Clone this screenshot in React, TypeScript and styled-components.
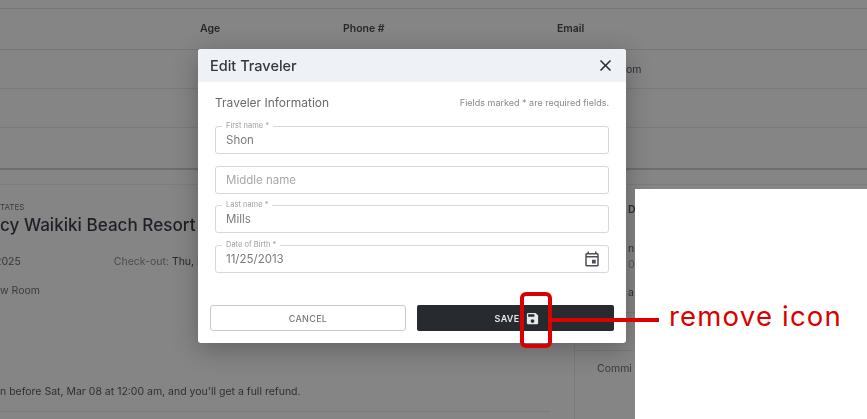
import * as React from 'react';
import { MdClose, MdOutlineEvent, MdSave } from 'react-icons/md';
import styled, { createGlobalStyle } from 'styled-components';

const FONT = `Inter, "Open Sans", "Liberation Sans", sans-serif`;

const GlobalStyle = createGlobalStyle`
  html, body {
    margin: 0;
    padding: 0;
    height: 100%;
    background: #ffffff;
  }
  *, *::before, *::after {
    box-sizing: border-box;
  }
  body {
    font-family: ${FONT};
  }
`;

const fields = [
  { label: 'First name *', value: 'Shon' },
  { label: '', value: 'Middle name', placeholder: true },
  { label: 'Last name *', value: 'Mills' },
  { label: 'Date of Birth *', value: '11/25/2013', calendar: true },
];

const App: React.FC = () => (
  <Frame>
    <GlobalStyle />

    <Screenshot>
      <Table>
        <TableHead>
          <HeadCell>Age</HeadCell>
          <HeadCell>Phone #</HeadCell>
          <HeadCell>Email</HeadCell>
        </TableHead>
        <TableRow>
          <EmailEnd>om</EmailEnd>
        </TableRow>
        <TableRow />
      </Table>

      <Divider />

      <Booking>
        <HotelColumn>
          <Country>TATES</Country>
          <HotelName>cy Waikiki Beach Resort</HotelName>
          <DatesRow>
            <span>2025</span>
            <CheckOut>
              Check-out: <b>Thu, M</b>
            </CheckOut>
          </DatesRow>
          <RoomName>w Room</RoomName>
          <RefundNote>n before Sat, Mar 08 at 12:00 am, and you'll get a full refund.</RefundNote>
        </HotelColumn>

        <SummaryColumn>
          <SummaryTitle>D</SummaryTitle>
          <SummaryLine>n</SummaryLine>
          <SummaryFaint>0</SummaryFaint>
          <SummaryLine $gap={14}>a</SummaryLine>
          <SummaryRule $gap={12} />
          <SummaryRule $gap={37} />
          <Commission>Commi</Commission>
        </SummaryColumn>
      </Booking>

      <Modal>
        <ModalHeader>
          <ModalTitle>Edit Traveler</ModalTitle>
          <MdClose size={19} color="#2b2f33" />
        </ModalHeader>

        <ModalBody>
          <SectionRow>
            <SectionTitle>Traveler Information</SectionTitle>
            <RequiredHint>Fields marked * are required fields.</RequiredHint>
          </SectionRow>

          <FieldStack>
            {fields.map((field) => (
              <Field key={field.value}>
                {field.label && <FieldLabel>{field.label}</FieldLabel>}
                <FieldValue $placeholder={field.placeholder}>{field.value}</FieldValue>
                {field.calendar && <MdOutlineEvent size={18} color="#4a4f54" />}
              </Field>
            ))}
          </FieldStack>
        </ModalBody>

        <ModalFooter>
          <CancelButton>CANCEL</CancelButton>
          <SaveButton>
            SAVE
            <MdSave size={15} />
          </SaveButton>
        </ModalFooter>
      </Modal>
    </Screenshot>

    <Blank />
    <Marker />
    <Leader />
    <Callout>remove icon</Callout>
  </Frame>
);

const Frame = styled.div`
  position: relative;
  width: 867px;
  height: 419px;
  overflow: hidden;
`;

const Screenshot = styled.div`
  position: relative;
  height: 100%;
  overflow: hidden;
  background: #858585;
  color: #2a2c30;
  filter: blur(0.45px);
`;

const Table = styled.section`
  padding-top: 8px;
`;

const TableHead = styled.div`
  display: grid;
  grid-template-columns: 143px 214px 1fr;
  align-items: center;
  height: 42px;
  padding: 0 0 2px 200px;
  border-top: 1px solid #777777;
  border-bottom: 1px solid #777777;
`;

const HeadCell = styled.span`
  font-size: 10.5px;
  font-weight: 600;
  color: #26282c;
`;

const TableRow = styled.div`
  display: flex;
  align-items: center;
  height: 39px;
  border-bottom: 1px solid #7a7a7a;
`;

const EmailEnd = styled.span`
  margin-left: 626px;
  font-size: 10.5px;
  color: #2e3034;
`;

const Divider = styled.div`
  height: 2px;
  margin-top: 40px;
  background: #6e6e6e;
`;

const Booking = styled.section`
  display: grid;
  grid-template-columns: 575px 1fr;
  height: 240px;
  margin-top: 14px;
  border-top: 1px solid #7d7d7d;
`;

const HotelColumn = styled.div`
  display: flex;
  flex-direction: column;
  padding: 16px 24px 0 0;
  border-right: 1px solid #7a7a7a;
`;

const Country = styled.span`
  font-size: 8px;
  line-height: 12px;
  color: #3c3c3c;
`;

const HotelName = styled.h2`
  margin: 0;
  font-size: 17.1px;
  font-weight: 500;
  line-height: 24px;
  color: #1d2026;
  white-space: nowrap;
`;

const DatesRow = styled.div`
  display: flex;
  gap: 93px;
  margin: 18px 0 0 -5px;
  font-size: 10.5px;
  line-height: 14px;
  color: #33353a;
`;

const CheckOut = styled.span`
  color: #4c4c4c;

  b {
    font-weight: 400;
    color: #26282c;
  }
`;

const RoomName = styled.span`
  margin-top: 15px;
  font-size: 10.5px;
  line-height: 14px;
  color: #3a3a3a;
`;

const RefundNote = styled.p`
  margin: 87px 0 0;
  padding-bottom: 12px;
  border-bottom: 1px solid #7a7a7a;
  font-size: 10.5px;
  line-height: 14px;
  color: #2e3034;
`;

const SummaryColumn = styled.div`
  display: flex;
  flex-direction: column;
  padding-top: 18px;
  font-size: 10.5px;
  line-height: 14px;
  color: #2e3034;
`;

const SummaryTitle = styled.span`
  padding-left: 53px;
  font-weight: 600;
`;

const SummaryLine = styled.span<{ $gap?: number }>`
  margin-top: ${(p) => p.$gap ?? 25}px;
  padding-left: 53px;
`;

const SummaryFaint = styled.span`
  margin-top: 2px;
  padding-left: 53px;
  color: #555555;
`;

const SummaryRule = styled.div<{ $gap: number }>`
  height: 1px;
  margin-top: ${(p) => p.$gap}px;
  background: #7a7a7a;
`;

const Commission = styled.span`
  margin-top: 11px;
  padding-left: 22px;
  color: #3a3a3a;
`;

const Modal = styled.div`
  position: absolute;
  top: 49px;
  left: 198px;
  width: 428px;
  height: 294px;
  display: flex;
  flex-direction: column;
  overflow: hidden;
  border-radius: 3px;
  background: #ffffff;
  box-shadow: 0 6px 26px rgba(0, 0, 0, 0.28);
`;

const ModalHeader = styled.header`
  display: flex;
  align-items: center;
  justify-content: space-between;
  flex-shrink: 0;
  height: 33px;
  padding: 0 11px 0 12px;
  background: #eef2f7;
`;

const ModalTitle = styled.h1`
  margin: 0;
  font-size: 14.5px;
  font-weight: 500;
  color: #33363b;
`;

const ModalBody = styled.div`
  flex: 1;
  padding: 13px 17px 0;
`;

const SectionRow = styled.div`
  display: flex;
  align-items: center;
  justify-content: space-between;
  height: 14px;
`;

const SectionTitle = styled.span`
  font-size: 12px;
  color: #6a6a6a;
`;

const RequiredHint = styled.span`
  font-size: 9px;
  color: #8a8a8a;
`;

const FieldStack = styled.div`
  display: flex;
  flex-direction: column;
  gap: 11.5px;
  margin-top: 17px;
`;

const Field = styled.div`
  position: relative;
  display: flex;
  align-items: center;
  justify-content: space-between;
  height: 28px;
  padding: 0 7px 0 10px;
  border: 1px solid #d8d8d8;
  border-radius: 3px;
`;

const FieldLabel = styled.span`
  position: absolute;
  top: -6px;
  left: 6px;
  padding: 0 4px;
  background: #ffffff;
  font-size: 7.5px;
  line-height: 9px;
  color: #a0a0a0;
`;

const FieldValue = styled.span<{ $placeholder?: boolean }>`
  font-size: 11.5px;
  color: ${(p) => (p.$placeholder ? '#a8a8a8' : '#7b7b7b')};
`;

const ModalFooter = styled.footer`
  display: grid;
  grid-template-columns: 196px 197px;
  justify-content: space-between;
  padding: 0 12px 12px;
`;

const CancelButton = styled.button`
  height: 26px;
  padding: 0;
  border: 1px solid #c9c9c9;
  border-radius: 3px;
  background: #ffffff;
  font-family: ${FONT};
  font-size: 9px;
  font-weight: 500;
  letter-spacing: 0.3px;
  color: #77797c;
`;

const SaveButton = styled.button`
  display: flex;
  align-items: center;
  justify-content: center;
  gap: 6px;
  height: 26px;
  padding: 0 0 0 4px;
  border: 0;
  border-radius: 2px;
  background: #272b2f;
  font-family: ${FONT};
  font-size: 9px;
  font-weight: 600;
  letter-spacing: 0.3px;
  color: #e6e8ea;
`;

const Blank = styled.div`
  position: absolute;
  top: 189px;
  left: 635px;
  right: 0;
  bottom: 0;
  background: #ffffff;
`;

const Marker = styled.div`
  position: absolute;
  top: 292px;
  left: 520px;
  width: 32px;
  height: 56px;
  border: 4px solid #d90000;
  border-radius: 6px;
`;

const Leader = styled.div`
  position: absolute;
  top: 318px;
  left: 551px;
  width: 108px;
  height: 4px;
  background: #d90000;
`;

const Callout = styled.span`
  position: absolute;
  top: 299px;
  left: 669px;
  font-size: 27.5px;
  font-weight: 400;
  line-height: 34px;
  letter-spacing: 1.2px;
  color: #d90000;
  white-space: nowrap;
`;

export default App;
